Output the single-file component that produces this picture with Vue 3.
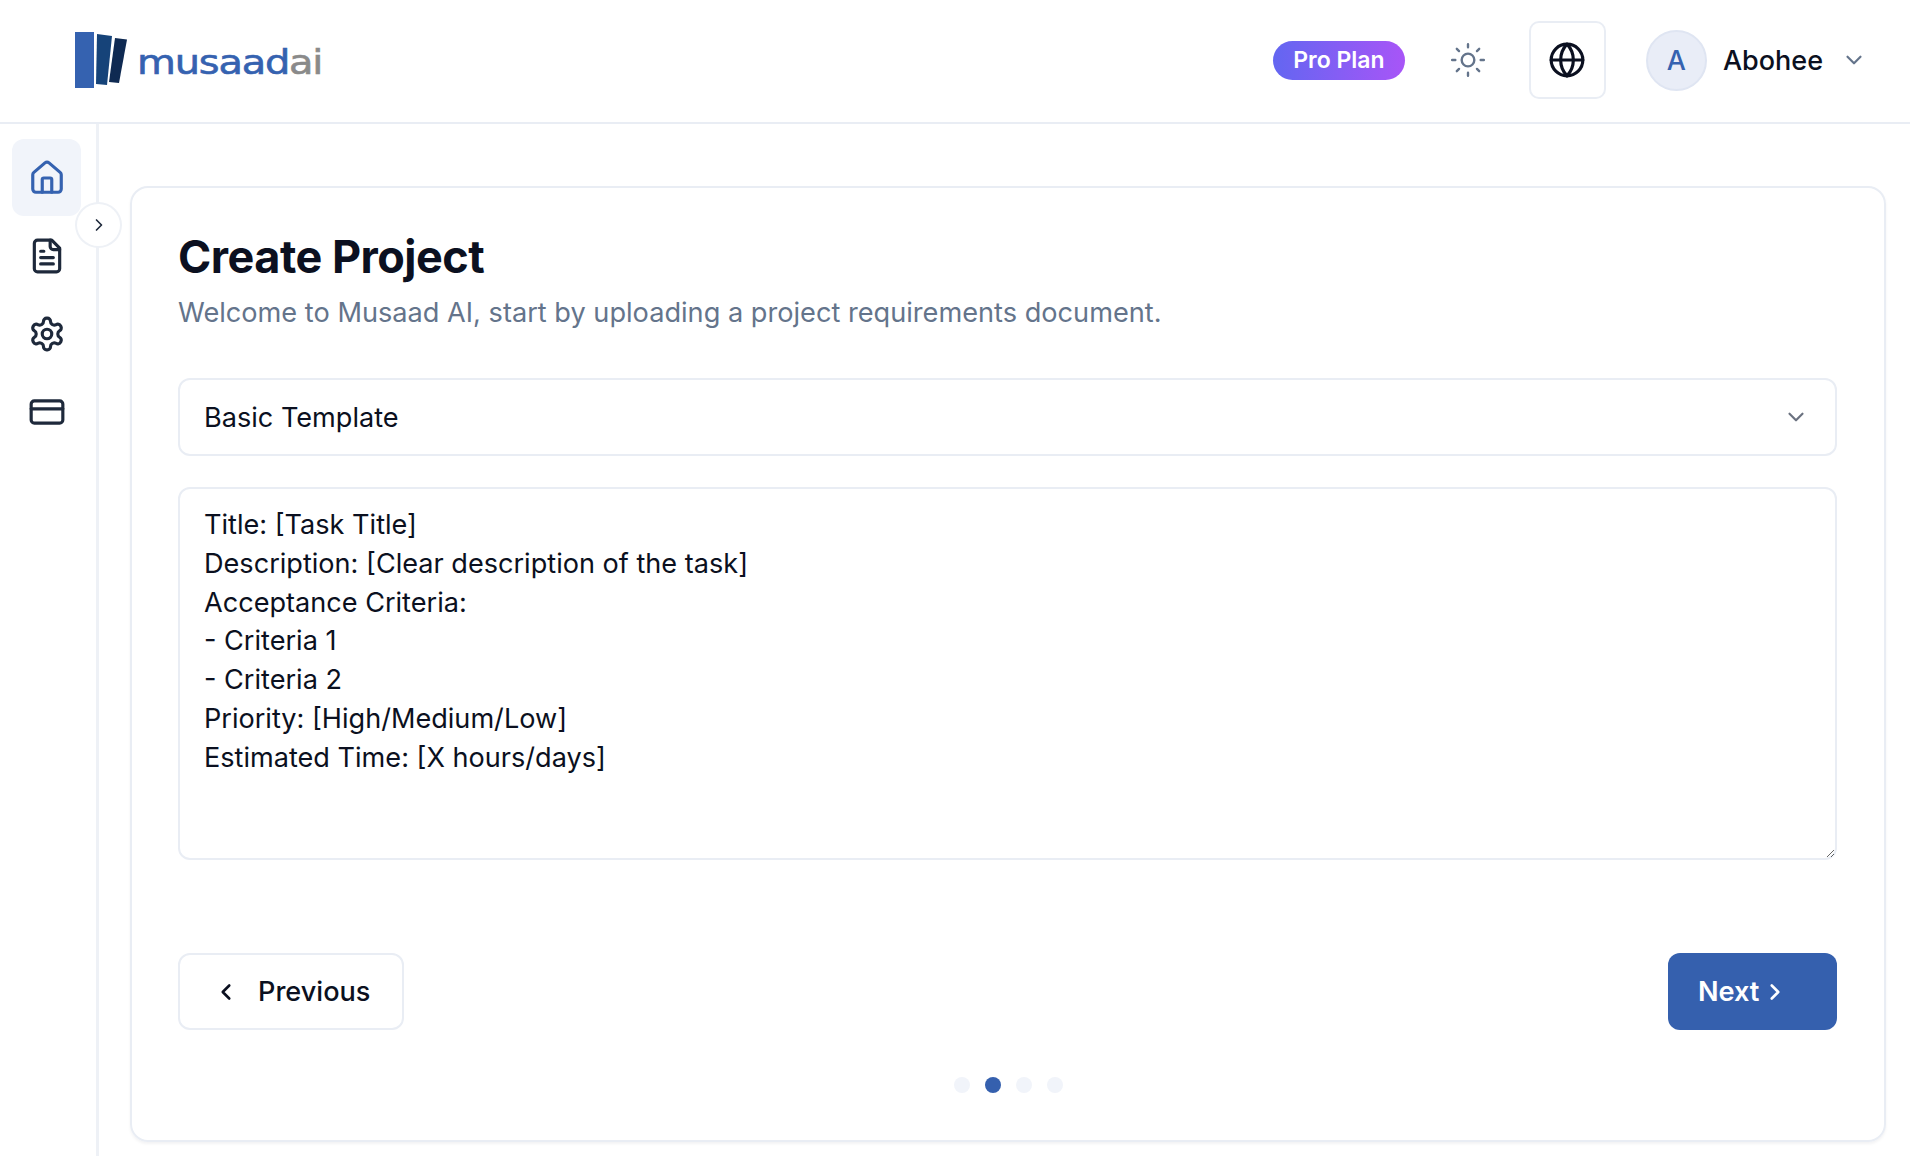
<script setup>
const templateText = `Title: [Task Title]
Description: [Clear description of the task]
Acceptance Criteria:
- Criteria 1
- Criteria 2
Priority: [High/Medium/Low]
Estimated Time: [X hours/days]`
const dots = [false, true, false, false]
</script>

<template>
  <div class="app">
    <header class="topbar">
      <div class="brand">
        <svg class="mark" viewBox="0 0 54 58" aria-hidden="true">
          <rect x="0" y="0" width="19" height="56" fill="#3562b0" />
          <polygon points="22,2 37,4 32,53 21,52" fill="#164379" />
          <polygon points="40,6 52,7.5 44,51 34,50" fill="#0f2a52" />
        </svg>
        <span class="wordmark">musaad<span class="ai">ai</span></span>
      </div>
      <div class="actions">
        <span class="plan">Pro Plan</span>
        <svg class="sun" viewBox="0 0 24 24" fill="none" stroke="currentColor" stroke-width="1.5" stroke-linecap="round" stroke-linejoin="round">
          <circle cx="12" cy="12" r="4" />
          <path d="M12 2v2M12 20v2M4.93 4.93l1.41 1.41M17.66 17.66l1.41 1.41M2 12h2M20 12h2M6.34 17.66l-1.41 1.41M19.07 4.93l-1.41 1.41" />
        </svg>
        <button class="globe-btn" type="button" aria-label="Language">
          <svg class="globe" viewBox="0 0 24 24" fill="none" stroke="currentColor" stroke-width="2" stroke-linecap="round" stroke-linejoin="round">
            <circle cx="12" cy="12" r="10" />
            <path d="M12 2a14.5 14.5 0 0 0 0 20 14.5 14.5 0 0 0 0-20" />
            <path d="M2 12h20" />
          </svg>
        </button>
        <div class="avatar">A</div>
        <span class="username">Abohee</span>
        <svg class="user-chevron" viewBox="0 0 24 24" fill="none" stroke="currentColor" stroke-width="2" stroke-linecap="round" stroke-linejoin="round">
          <path d="m6 9 6 6 6-6" />
        </svg>
      </div>
    </header>

    <div class="body">
      <aside class="sidebar">
        <a class="nav-item active">
          <svg class="nav-icon" viewBox="0 0 24 24" fill="none" stroke="currentColor" stroke-width="2" stroke-linecap="round" stroke-linejoin="round">
            <path d="M15 21v-8a1 1 0 0 0-1-1h-4a1 1 0 0 0-1 1v8" />
            <path d="M3 10a2 2 0 0 1 .709-1.528l7-5.999a2 2 0 0 1 2.582 0l7 5.999A2 2 0 0 1 21 10v9a2 2 0 0 1-2 2H5a2 2 0 0 1-2-2z" />
          </svg>
        </a>
        <a class="nav-item">
          <svg class="nav-icon" viewBox="0 0 24 24" fill="none" stroke="currentColor" stroke-width="2" stroke-linecap="round" stroke-linejoin="round">
            <path d="M15 2H6a2 2 0 0 0-2 2v16a2 2 0 0 0 2 2h12a2 2 0 0 0 2-2V7Z" />
            <path d="M14 2v4a2 2 0 0 0 2 2h4" />
            <path d="M10 9H8M16 13H8M16 17H8" />
          </svg>
        </a>
        <a class="nav-item">
          <svg class="nav-icon" viewBox="0 0 24 24" fill="none" stroke="currentColor" stroke-width="2" stroke-linecap="round" stroke-linejoin="round">
            <path d="M12.22 2h-.44a2 2 0 0 0-2 2v.18a2 2 0 0 1-1 1.73l-.43.25a2 2 0 0 1-2 0l-.15-.08a2 2 0 0 0-2.73.73l-.22.38a2 2 0 0 0 .73 2.73l.15.1a2 2 0 0 1 1 1.72v.51a2 2 0 0 1-1 1.74l-.15.09a2 2 0 0 0-.73 2.73l.22.38a2 2 0 0 0 2.73.73l.15-.08a2 2 0 0 1 2 0l.43.25a2 2 0 0 1 1 1.73V20a2 2 0 0 0 2 2h.44a2 2 0 0 0 2-2v-.18a2 2 0 0 1 1-1.73l.43-.25a2 2 0 0 1 2 0l.15.08a2 2 0 0 0 2.73-.73l.22-.39a2 2 0 0 0-.73-2.73l-.15-.08a2 2 0 0 1-1-1.74v-.5a2 2 0 0 1 1-1.74l.15-.09a2 2 0 0 0 .73-2.73l-.22-.38a2 2 0 0 0-2.73-.73l-.15.08a2 2 0 0 1-2 0l-.43-.25a2 2 0 0 1-1-1.73V4a2 2 0 0 0-2-2z" />
            <circle cx="12" cy="12" r="3" />
          </svg>
        </a>
        <a class="nav-item">
          <svg class="nav-icon" viewBox="0 0 24 24" fill="none" stroke="currentColor" stroke-width="2" stroke-linecap="round" stroke-linejoin="round">
            <rect x="2" y="5" width="20" height="14" rx="2" />
            <path d="M2 10h20" />
          </svg>
        </a>
        <button class="collapse" type="button" aria-label="Expand sidebar">
          <svg viewBox="0 0 24 24" fill="none" stroke="currentColor" stroke-width="2" stroke-linecap="round" stroke-linejoin="round">
            <path d="m9 18 6-6-6-6" />
          </svg>
        </button>
      </aside>

      <main class="main">
        <section class="card">
          <h1 class="title">Create Project</h1>
          <p class="subtitle">Welcome to Musaad AI, start by uploading a project requirements document.</p>

          <div class="select">
            <span>Basic Template</span>
            <svg class="select-chevron" viewBox="0 0 24 24" fill="none" stroke="currentColor" stroke-width="2" stroke-linecap="round" stroke-linejoin="round">
              <path d="m6 9 6 6 6-6" />
            </svg>
          </div>

          <textarea class="editor" :value="templateText" spellcheck="false"></textarea>

          <div class="buttons">
            <button class="btn prev" type="button">
              <svg viewBox="0 0 24 24" fill="none" stroke="currentColor" stroke-width="2.4" stroke-linecap="round" stroke-linejoin="round">
                <path d="m15 18-6-6 6-6" />
              </svg>
              Previous
            </button>
            <button class="btn next" type="button">
              Next
              <svg viewBox="0 0 24 24" fill="none" stroke="currentColor" stroke-width="2.4" stroke-linecap="round" stroke-linejoin="round">
                <path d="m9 18 6-6-6-6" />
              </svg>
            </button>
          </div>

          <div class="dots">
            <span v-for="(on, i) in dots" :key="i" class="dot" :class="{ on }"></span>
          </div>
        </section>
      </main>
    </div>
  </div>
</template>

<style>
html, body { margin: 0; background: #fff; overflow: hidden; }
</style>

<style scoped>
* { box-sizing: border-box; }
.app {
  height: 1156px;
  display: flex;
  flex-direction: column;
  font-family: Inter, "Noto Sans", sans-serif;
  color: #0b1020;
  background: #fff;
  overflow: hidden;
}
.topbar {
  flex: none;
  height: 124px;
  display: flex;
  align-items: center;
  justify-content: space-between;
  padding: 0 43px 2px 75px;
  border-bottom: 2px solid #e9edf4;
}
.brand { display: flex; align-items: center; gap: 8px; }
.mark { width: 54px; height: 58px; display: block; margin-top: 2px; }
.wordmark {
  font-family: "DejaVu Sans", sans-serif;
  font-size: 33px;
  letter-spacing: -1px;
  color: #3562b0;
  line-height: 1;
  margin-top: 4px;
  transform: scaleX(1.21);
  transform-origin: left center;
  -webkit-text-stroke: 0.6px currentColor;
}
.ai { color: #8a8a8a; }
.actions { display: flex; align-items: center; }
.plan {
  width: 132px;
  height: 39px;
  display: flex;
  align-items: center;
  justify-content: center;
  border-radius: 20px;
  background: linear-gradient(90deg, #6366f1, #a855f7);
  color: #fff;
  font-size: 23px;
  font-weight: 600;
}
.sun { width: 38px; height: 38px; color: #64748b; margin-left: 44px; }
.globe-btn {
  width: 77px;
  height: 78px;
  margin-left: 42px;
  display: flex;
  align-items: center;
  justify-content: center;
  background: #fff;
  border: 2px solid #e9edf4;
  border-radius: 10px;
  color: #0b1020;
  padding: 0;
}
.globe { width: 38px; height: 38px; }
.avatar {
  width: 61px;
  height: 61px;
  margin-left: 40px;
  border-radius: 50%;
  display: flex;
  align-items: center;
  justify-content: center;
  background: #e9edf7;
  border: 2px solid #dfe5f2;
  color: #3562b0;
  font-size: 27px;
  font-weight: 500;
}
.username { margin-left: 16px; font-size: 27px; font-weight: 500; }
.user-chevron { width: 26px; height: 26px; color: #64748b; margin-left: 18px; }
.body { flex: 1; min-height: 0; display: flex; }
.sidebar {
  position: relative;
  flex: none;
  width: 99px;
  border-right: 3px solid #eef1f6;
  padding: 15px 0 0 12px;
  display: flex;
  flex-direction: column;
  gap: 1px;
}
.nav-item {
  width: 69px;
  height: 77px;
  display: flex;
  align-items: center;
  justify-content: center;
  border-radius: 12px;
  color: #1e293b;
}
.nav-item.active { background: #f1f4fa; color: #3562b0; }
.nav-icon { width: 38px; height: 38px; }
.collapse {
  position: absolute;
  top: 78px;
  left: 75px;
  width: 47px;
  height: 46px;
  border-radius: 50%;
  border: 2px solid #eef1f6;
  background: #fff;
  color: #1e293b;
  display: flex;
  align-items: center;
  justify-content: center;
  padding: 0;
}
.collapse svg { width: 20px; height: 20px; }
.main { flex: 1; min-width: 0; padding: 62px 24px 14px 31px; display: flex; }
.card {
  flex: 1;
  min-width: 0;
  border: 2px solid #e9edf4;
  border-radius: 18px;
  padding: 42px 47px 0 46px;
  box-shadow: 0 2px 3px rgba(15, 23, 42, 0.05);
  display: flex;
  flex-direction: column;
}
.title {
  margin: 0;
  font-size: 45px;
  line-height: 54px;
  font-weight: 700;
  letter-spacing: -0.5px;
  color: #0b1020;
}
.subtitle {
  margin: 9px 0 0;
  font-size: 27.17px;
  line-height: 40px;
  color: #64748b;
}
.select {
  margin-top: 45px;
  height: 78px;
  border: 2px solid #e9edf4;
  border-radius: 12px;
  padding: 0 26px 0 24px;
  display: flex;
  align-items: center;
  justify-content: space-between;
  font-size: 27.1px;
  color: #0b1020;
}
.select-chevron { width: 26px; height: 26px; color: #6b7280; }
.editor {
  display: block;
  width: 100%;
  height: 373px;
  margin-top: 31px;
  padding: 17px 24px;
  border: 2px solid #e9edf4;
  border-radius: 12px;
  font-family: inherit;
  font-size: 27.1px;
  line-height: 38.8px;
  color: #0b1020;
  background: #fff;
  outline: none;
  overflow: hidden;
}
.buttons {
  margin-top: 93px;
  display: flex;
  justify-content: space-between;
}
.btn {
  height: 77px;
  display: flex;
  align-items: center;
  border-radius: 12px;
  font-family: inherit;
  font-size: 27.1px;
  font-weight: 500;
}
.btn svg { width: 26px; height: 26px; }
.prev {
  width: 226px;
  padding: 0 0 0 33px;
  gap: 19px;
  background: #fff;
  border: 2px solid #e9edf4;
  color: #0b1020;
}
.next {
  width: 169px;
  padding: 0 0 0 30px;
  gap: 3px;
  background: #3560ae;
  border: none;
  color: #fff;
  font-weight: 600;
}
.dots {
  margin-top: 47px;
  padding-left: 2px;
  display: flex;
  justify-content: center;
  gap: 15px;
}
.dot { width: 16px; height: 16px; border-radius: 50%; background: #f1f4fa; }
.dot.on { background: #3560ae; }
</style>
